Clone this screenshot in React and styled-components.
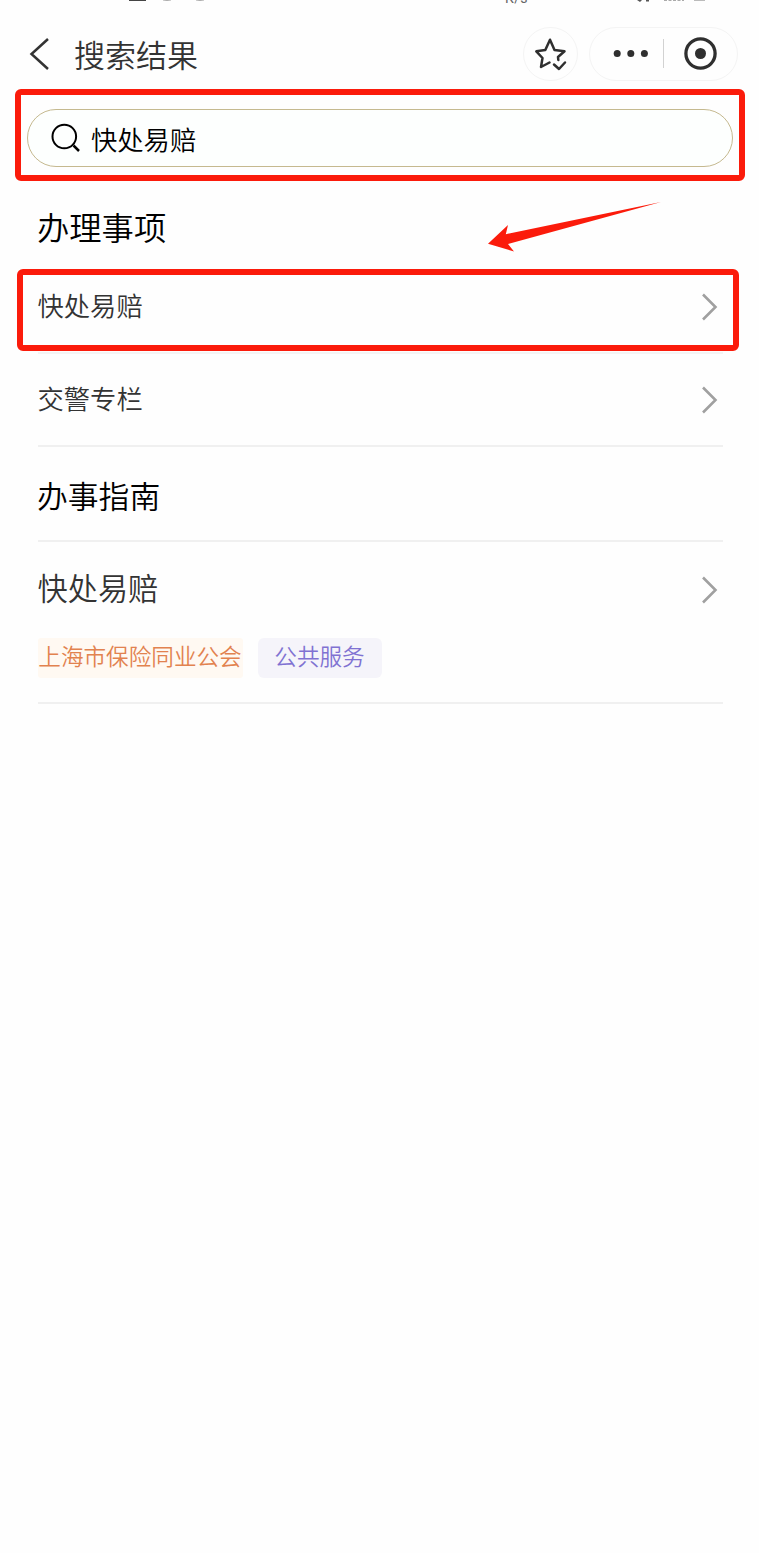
import React from 'react';
import styled, { createGlobalStyle } from 'styled-components';

const GlobalStyle = createGlobalStyle`
  * {
    box-sizing: border-box;
  }

  body {
    margin: 0;
    background: #fefefe;
    font-family: "Noto Sans CJK SC", sans-serif;
    font-weight: 350;
  }
`;

const Page = styled.div`
  width: 759px;
  height: 1553px;
  overflow: hidden;
  background: #fefefe;
`;

const StatusBar = styled.div`
  display: flex;
  justify-content: space-between;
  height: 8px;
  overflow: hidden;
  padding: 0 52px 0 60px;
`;

const StatusIcons = styled.svg`
  display: block;
  height: 8px;
`;

const Speed = styled.span`
  margin: -12px 105px 0 auto;
  font-family: Roboto, sans-serif;
  font-size: 14px;
  font-weight: 400;
  line-height: 20px;
  letter-spacing: 0.4px;
  color: #666;
`;

const Header = styled.header`
  display: flex;
  align-items: center;
  height: 81px;
  padding: 0 21px 0 29px;
`;

const BackIcon = styled.svg`
  width: 20px;
  height: 34px;
  margin-top: 10px;
`;

const PageName = styled.h1`
  flex: 1;
  margin: 10px 0 0 25px;
  font-size: 31px;
  font-weight: 350;
  line-height: 40px;
  color: #333;
`;

const RoundButton = styled.div`
  display: flex;
  align-items: center;
  justify-content: center;
  width: 55px;
  height: 54px;
  margin: 10px 11px 0 0;
  border: 1px solid #f4f4f4;
  border-radius: 27px;
`;

const Capsule = styled.div`
  display: flex;
  align-items: center;
  width: 149px;
  height: 54px;
  margin-top: 10px;
  padding-left: 23px;
  border: 1px solid #f4f4f4;
  border-radius: 27px;
`;

const CapsuleLine = styled.div`
  width: 1px;
  height: 29px;
  margin: 0 20px 0 14px;
  background: #d2d2d2;
`;

const Icon = styled.svg`
  display: block;
  flex-shrink: 0;
`;

const ArrowIcon = styled(Icon)`
  margin-top: 4px;
`;

const SearchFrame = styled.div`
  width: 730px;
  height: 92px;
  margin-left: 15px;
  padding: 14px 6px 0;
  border: 6px solid #fb1b0b;
  border-radius: 6px;
`;

const SearchBox = styled.div`
  display: flex;
  align-items: center;
  height: 58px;
  padding-left: 23px;
  border: 1.5px solid #c5b98f;
  border-radius: 29px;
  background: #fdfffe;
`;

const Keyword = styled.span`
  margin: 2px 0 0 10px;
  font-size: 26.3px;
  line-height: 36px;
  color: #000;
`;

const SectionHead = styled.div`
  display: flex;
  align-items: center;
  justify-content: space-between;
  height: ${props => props.height};
  padding: 0 98px 0 37px;
`;

const SectionTitle = styled.h2`
  margin: 2px 0 0;
  font-size: ${props => props.size};
  font-weight: 350;
  line-height: 44px;
  color: #000;
`;

const RowFrame = styled.div`
  display: flex;
  width: 722px;
  height: 82px;
  margin: 0 0 1px 17px;
  padding: 0 10px 0 14.5px;
  border: 6px solid #fb1b0b;
  border-radius: 6px;
`;

const Row = styled.div`
  display: flex;
  flex: 1;
  align-items: center;
  justify-content: space-between;
  height: ${props => props.height};
`;

const RowName = styled.span`
  margin-top: ${props => props.shift || '-4px'};
  font-size: ${props => props.size || '26.3px'};
  line-height: 40px;
  color: #333;
`;

const List = styled.div`
  width: 685px;
  margin-left: 37.5px;
`;

const Line = styled.div`
  height: 2px;
  background: ${props => props.color || '#f0f0f0'};
`;

const Tags = styled.div`
  display: flex;
  gap: 15px;
  height: 64px;
`;

const Tag = styled.span`
  width: ${props => props.width};
  height: 40px;
  border-radius: ${props => props.radius};
  background: ${props => props.background};
  color: ${props => props.color};
  font-size: 22.6px;
  line-height: 36px;
  text-align: center;
  white-space: nowrap;
`;

const ChevronIcon = styled(Icon)`
  margin-right: 5px;
`;

const Chevron = () => (
  <ChevronIcon width="17" height="28" viewBox="0 0 17 28" fill="none" stroke="#a0a0a0" strokeWidth="2.6">
    <path d="M2 1.5 L14.5 14 L2 26.5" />
  </ChevronIcon>
);

const App = () => {
  return (
    <>
      <GlobalStyle />
      <Page>
        <StatusBar>
          <StatusIcons width="150" viewBox="60 0 150 8">
            <path d="M129 0h17v1h-17z" fill="#444" />
            <path d="M163 0q4 1 8 0M196 0q4 1 8 0" stroke="#aaa" fill="none" />
          </StatusIcons>
          <Speed>K/s</Speed>
          <StatusIcons width="74" viewBox="633 0 74 8">
            <path d="M637 0h5l-2 2zM646 0h3v1.5h-3z" fill="#555" />
            <path d="M664 .5h20" stroke="#aaa" strokeDasharray="3 1.5" />
            <path d="M694 .5h11" stroke="#bbb" />
          </StatusIcons>
        </StatusBar>

        <Header>
          <BackIcon viewBox="0 0 20 34" fill="none" stroke="#333" strokeWidth="2.5">
            <path d="M19 2 L2.5 17 L19 32" />
          </BackIcon>
          <PageName>搜索结果</PageName>
          <RoundButton>
            <Icon width="34" height="34" viewBox="534 37 34 34" fill="none" stroke="#2f2f2f" strokeWidth="2.5" strokeLinecap="round" strokeLinejoin="round">
              <path d="M549.5 62.5 L541 67 L542.5 58 L536.3 51.3 L545.3 50 L550 39.7 L554.5 50 L564.5 51.3 L558 57 L558.3 60" />
              <path d="M554 64.5 L559 69 L565 62.5" />
            </Icon>
          </RoundButton>
          <Capsule>
            <Icon width="36" height="8" viewBox="0 .7 36 8" fill="#2f2f2f">
              <circle cx="4.2" cy="4.2" r="3.5" />
              <circle cx="17.8" cy="4.2" r="3.5" />
              <circle cx="31.4" cy="4.2" r="3.5" />
            </Icon>
            <CapsuleLine />
            <Icon width="33" height="33" viewBox="0 0 33 33">
              <circle cx="16.5" cy="16.5" r="14.6" fill="none" stroke="#2f2f2f" strokeWidth="3.3" />
              <circle cx="16.5" cy="16.5" r="5.5" fill="#2f2f2f" />
            </Icon>
          </Capsule>
        </Header>

        <SearchFrame>
          <SearchBox>
            <Icon width="30" height="30" viewBox="0 0 30 30" fill="none" stroke="#000" strokeWidth="2">
              <circle cx="13.3" cy="13.5" r="11.8" />
              <path d="M22.5 22.5 L28 28" strokeWidth="2.5" />
            </Icon>
            <Keyword>快处易赔</Keyword>
          </SearchBox>
        </SearchFrame>

        <SectionHead height="88px">
          <SectionTitle size="32.3px">办理事项</SectionTitle>
          <ArrowIcon width="174" height="51" viewBox="487 202 174 51" fill="#fb1b0b">
            <path d="M488 243.7 L508 225 L505.8 234.2 L661 202 L508 244 L514 251.5 Z" />
          </ArrowIcon>
        </SectionHead>

        <RowFrame>
          <Row height="64px">
            <RowName>快处易赔</RowName>
            <Chevron />
          </Row>
        </RowFrame>

        <List>
          <Line color="#f4f4f4" />
          <Row height="91px">
            <RowName>交警专栏</RowName>
            <Chevron />
          </Row>
          <Line />
        </List>

        <SectionHead height="93px">
          <SectionTitle size="30.8px">办事指南</SectionTitle>
        </SectionHead>

        <List>
          <Line />
          <Row height="96px">
            <RowName size="30.2px" shift="-6px">快处易赔</RowName>
            <Chevron />
          </Row>
          <Tags>
            <Tag width="205px" radius="3px" background="#fff9f2" color="#e2824f">上海市保险同业公会</Tag>
            <Tag width="124px" radius="6px" background="#f5f4fa" color="#8072d2">公共服务</Tag>
          </Tags>
          <Line />
        </List>
      </Page>
    </>
  );
};

export default App;
